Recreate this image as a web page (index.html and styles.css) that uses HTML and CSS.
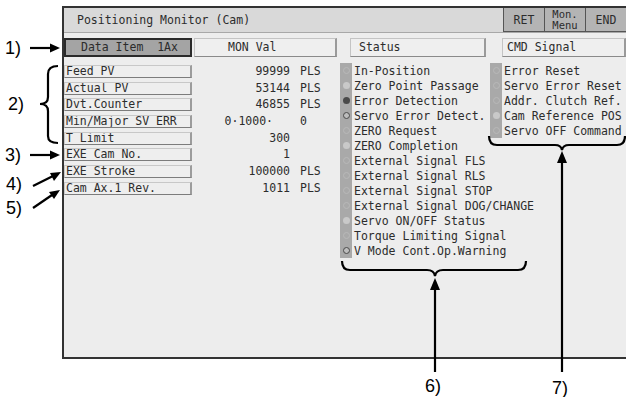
FILE: index.html
```html
<!DOCTYPE html>
<html>
<head>
<meta charset="utf-8">
<link rel="stylesheet" href="styles.css">
</head>
<body>
<div class="page">
  <div class="screen">
    <div class="titlebar">
      <div class="title">Positioning Monitor (Cam)</div>
      <div class="tbtn">RET</div>
      <div class="tbtn two">Mon.<br>Menu</div>
      <div class="tbtn">END</div>
    </div>
    <div class="headrow">
      <div class="hd-item">Data Item&nbsp;&nbsp;1Ax</div>
      <div class="hd-box hd-mon">MON Val</div>
      <div class="hd-box hd-status">Status</div>
      <div class="hd-box hd-cmd">CMD Signal</div>
    </div>
    <div class="main">
      <div class="datalist">
        <div class="drow"><span class="lbl">Feed PV</span><span class="num">99999</span><span class="unit">PLS</span></div>
        <div class="drow"><span class="lbl">Actual PV</span><span class="num">53144</span><span class="unit">PLS</span></div>
        <div class="drow"><span class="lbl">Dvt.Counter</span><span class="num">46855</span><span class="unit">PLS</span></div>
        <div class="drow"><span class="lbl">Min/Major SV ERR</span><span class="num split">0·1000·</span><span class="unit">0</span></div>
        <div class="drow"><span class="lbl">T Limit</span><span class="num">300</span><span class="unit"></span></div>
        <div class="drow"><span class="lbl">EXE Cam No.</span><span class="num">1</span><span class="unit"></span></div>
        <div class="drow"><span class="lbl">EXE Stroke</span><span class="num">100000</span><span class="unit">PLS</span></div>
        <div class="drow"><span class="lbl">Cam Ax.1 Rev.</span><span class="num">1011</span><span class="unit">PLS</span></div>
      </div>
      <ul class="sig sig-status">
        <li><i class="led off"></i>In-Position</li>
        <li><i class="led lit"></i>Zero Point Passage</li>
        <li><i class="led dark"></i>Error Detection</li>
        <li><i class="led ring"></i>Servo Error Detect.</li>
        <li><i class="led off"></i>ZERO Request</li>
        <li><i class="led lit"></i>ZERO Completion</li>
        <li><i class="led off"></i>External Signal FLS</li>
        <li><i class="led off"></i>External Signal RLS</li>
        <li><i class="led off"></i>External Signal STOP</li>
        <li><i class="led off"></i>External Signal DOG/CHANGE</li>
        <li><i class="led lit"></i>Servo ON/OFF Status</li>
        <li><i class="led off"></i>Torque Limiting Signal</li>
        <li><i class="led ring"></i>V Mode Cont.Op.Warning</li>
      </ul>
      <ul class="sig sig-cmd">
        <li><i class="led off"></i>Error Reset</li>
        <li><i class="led off"></i>Servo Error Reset</li>
        <li><i class="led off"></i>Addr. Clutch Ref.</li>
        <li><i class="led lit"></i>Cam Reference POS</li>
        <li><i class="led off"></i>Servo OFF Command</li>
      </ul>
    </div>
  </div>

  <svg class="notes" width="626" height="397" viewBox="0 0 626 397">
    <g class="ntext">
      <text x="5" y="54">1)</text>
      <text x="8" y="110">2)</text>
      <text x="5" y="161">3)</text>
      <text x="6" y="190">4)</text>
      <text x="6" y="214">5)</text>
      <text x="425" y="392">6)</text>
      <text x="552" y="394">7)</text>
    </g>
    <g class="nline">
      <line x1="30" y1="48" x2="52" y2="48"/>
      <line x1="30" y1="155" x2="52" y2="155"/>
      <line x1="33" y1="186" x2="53" y2="176"/>
      <line x1="33" y1="208" x2="52" y2="195"/>
      <path d="M58,66 Q48,66 48,74 L48,97 Q48,104 40,104 Q48,104 48,111 L48,136 Q48,143 58,143"/>
      <path d="M342,261 Q342,270 350,270 L427,270 Q434,270 435,276 Q436,270 443,270 L518,270 Q526,270 526,261"/>
      <path d="M489,136 Q489,145 497,145 L555,145 Q561,145 562,150 Q563,145 569,145 L617,145 Q625,145 625,136"/>
      <line x1="435" y1="286" x2="435" y2="372"/>
      <line x1="562" y1="160" x2="562" y2="372"/>
    </g>
    <g class="nhead">
      <polygon points="60,48 50,43.5 50,52.5"/>
      <polygon points="60,155 50,150.5 50,159.5"/>
      <polygon points="61,172 50,173 54,181"/>
      <polygon points="60,190 49,192 54,199"/>
      <polygon points="435,278 430,290 440,290"/>
      <polygon points="562,151 557,163 567,163"/>
    </g>
  </svg>
</div>
</body>
</html>
```

FILE: styles.css
```css
html, body {
  margin: 0;
  padding: 0;
  background: #ffffff;
}
body {
  width: 626px;
  height: 397px;
  overflow: hidden;
}
.page {
  position: relative;
  width: 626px;
  height: 397px;
  padding: 6px 0 0 62px;
  box-sizing: border-box;
}
.screen {
  width: 566px;
  height: 353px;
  box-sizing: border-box;
  border: 2px solid #333333;
  background: #ededed;
  font-family: "DejaVu Sans Mono", "Liberation Mono", monospace;
  font-size: 11.5px;
  color: #2c2c2c;
  overflow: hidden;
}
.titlebar {
  display: flex;
  height: 24px;
  background: #d9d9d9;
  border-bottom: 1px solid #a8a8a8;
}
.title {
  flex: 1;
  padding-left: 13px;
  line-height: 24px;
}
.tbtn {
  width: 41px;
  box-sizing: border-box;
  background: #b4b4b4;
  border-left: 1px solid #555555;
  border-bottom: 1px solid #555555;
  text-align: center;
  line-height: 24px;
}
.tbtn.two {
  font-size: 10.5px;
  line-height: 11px;
  padding-top: 1px;
}
.headrow {
  display: grid;
  grid-template-columns: 128px 146px 150px 1fr;
  height: 19px;
  margin-top: 5px;
}
.hd-item {
  background: #a4a4a4;
  border: 2px solid #2a2a2a;
  box-sizing: border-box;
  padding-left: 15px;
  line-height: 15px;
}
.hd-box {
  box-sizing: border-box;
  background: #efefef;
  border: 1px solid #c4c4c4;
  border-right: 2px solid #9a9a9a;
  border-bottom-color: #8a8a8a;
  line-height: 17px;
}
.hd-mon {
  margin: 0 1px 0 2px;
  padding-left: 33px;
}
.hd-status {
  margin: 0 2px 0 12px;
  padding-left: 8px;
}
.hd-cmd {
  margin-left: 14px;
  padding-left: 4px;
}
.main {
  display: grid;
  grid-template-columns: 274px 150px 1fr;
  margin-top: 6px;
  align-items: start;
}
.datalist {
  padding-top: 2px;
  display: grid;
  grid-auto-rows: 16.7px;
}
.drow {
  display: grid;
  grid-template-columns: 128px 98px 10px 1fr;
  align-items: start;
}
.lbl {
  grid-column: 1;
  height: 13px;
  box-sizing: border-box;
  background: #eeeeee;
  border: 1px solid #c8c8c8;
  border-right: 2px solid #9c9c9c;
  border-bottom: 1px solid #7c7c7c;
  padding-left: 1px;
  line-height: 11px;
  white-space: nowrap;
  overflow: hidden;
}
.num {
  grid-column: 2;
  text-align: right;
  line-height: 13px;
}
.num.split {
  padding-right: 17px;
}
.unit {
  grid-column: 4;
  line-height: 13px;
}
.sig {
  list-style: none;
  margin: 0 0 0 2px;
  padding: 0;
}
.sig li {
  display: flex;
  align-items: center;
  height: 15px;
  white-space: nowrap;
}
.led {
  flex: none;
  width: 12px;
  height: 15px;
  margin-right: 2px;
  background: #a9a9a9;
  position: relative;
}
.led::after {
  content: "";
  position: absolute;
  left: 3px;
  top: 4px;
  width: 7px;
  height: 7px;
  box-sizing: border-box;
  border-radius: 50%;
}
.led.off::after {
  border: 1px solid #b9b9b9;
}
.led.lit::after {
  background: #c9c9c9;
}
.led.dark::after {
  background: #4a4a4a;
}
.led.ring::after {
  border: 1.5px solid #4a4a4a;
  background: #bdbdbd;
}
.notes {
  position: absolute;
  left: 0;
  top: 0;
  pointer-events: none;
}
.ntext text {
  font-family: "Liberation Sans", Arial, sans-serif;
  font-size: 18px;
  fill: #000000;
}
.nline line, .nline path {
  stroke: #000000;
  stroke-width: 2.2;
  fill: none;
}
.nhead polygon {
  fill: #000000;
}
```
